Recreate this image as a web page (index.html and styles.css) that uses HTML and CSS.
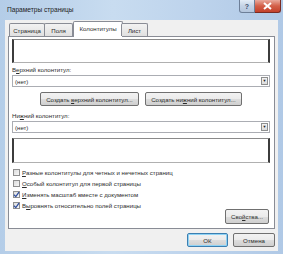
FILE: index.html
```html
<!DOCTYPE html>
<html lang="ru">
<head>
    <meta charset="UTF-8">
    <title>Параметры страницы</title>
    <link rel="stylesheet" href="styles.css">
</head>
<body>
<div class="window">
    <div class="titlebar">
        <div class="title">Параметры страницы</div>
        <div class="controls">
            <div class="ctl help">?</div>
            <div class="ctl close">
                <svg width="9" height="8" viewBox="0 0 9 8"><path d="M1 1 L8 7 M8 1 L1 7" stroke="#fff" stroke-width="2"/></svg>
            </div>
        </div>
    </div>

    <div class="client">
        <div class="tabs">
            <div class="tab t1">Страница</div>
            <div class="tab t2">Поля</div>
            <div class="tab active">Колонтитулы</div>
            <div class="tab t4">Лист</div>
        </div>

        <div class="panel">
            <div class="preview top"></div>

            <div class="label first">В<u>е</u>рхний колонтитул:</div>
            <div class="select">
                <span>(нет)</span>
                <div class="arrow">▼</div>
            </div>

            <div class="create-row">
                <button class="btn create1">Создать <u>в</u>ерхний колонтитул...</button>
                <button class="btn create2">Создать ни<u>ж</u>ний колонтитул...</button>
            </div>

            <div class="label second">Ни<u>ж</u>ний колонтитул:</div>
            <div class="select">
                <span>(нет)</span>
                <div class="arrow">▼</div>
            </div>

            <div class="preview bottom"></div>

            <div class="checks">
                <div class="check"><span class="box"></span><span><u>Р</u>азные колонтитулы для четных и нечетных страниц</span></div>
                <div class="check"><span class="box"></span><span><u>О</u>собый колонтитул для первой страницы</span></div>
                <div class="check"><span class="box"><svg width="7" height="7" viewBox="0 0 7 7"><path d="M1 3.8 L2.8 5.6 L6 1.2" stroke="#2f4f9e" stroke-width="1.3" fill="none"/></svg></span><span><u>И</u>зменять масштаб вместе с документом</span></div>
                <div class="check"><span class="box"><svg width="7" height="7" viewBox="0 0 7 7"><path d="M1 3.8 L2.8 5.6 L6 1.2" stroke="#2f4f9e" stroke-width="1.3" fill="none"/></svg></span><span>В<u>ы</u>ровнять относительно полей страницы</span></div>
            </div>

            <div class="props-row">
                <button class="btn props">Сво<u>й</u>ства...</button>
            </div>
        </div>

        <div class="footer">
            <button class="btn ok">ОК</button>
            <button class="btn cancel">Отмена</button>
        </div>
    </div>
</div>
</body>
</html>
```

FILE: styles.css
```css
body {
    margin: 0;
    width: 283px;
    height: 254px;
    overflow: hidden;
    font-family: "Liberation Sans", Arial, sans-serif;
    font-size: 6.1px;
    color: #2b2b2b;
    background: #bcd3ea;
}
.window {
    height: 254px;
    box-sizing: border-box;
    padding: 0 5px 3px 5px;
    display: flex;
    flex-direction: column;
    background: linear-gradient(90deg, #b4cde8, #c8dcf0 40%, #bdd3ec 70%, #b0c9e6);
}
.titlebar {
    height: 20px;
    display: flex;
    align-items: flex-start;
}
.title {
    padding: 6px 0 0 2px;
    font-size: 6.6px;
    color: #1c1c1c;
}
.controls {
    margin-left: auto;
    margin-right: -3px;
    display: flex;
}
.ctl {
    height: 13px;
    display: flex;
    align-items: center;
    justify-content: center;
    border: 1px solid #6d7f98;
    border-top: none;
    box-sizing: border-box;
}
.help {
    width: 16px;
    border-radius: 0 0 0 3px;
    background: linear-gradient(#e4edf7, #c4d3e6 50%, #b4c6dd);
    color: #3c4f6e;
    font-weight: bold;
    font-size: 7px;
}
.close {
    width: 26px;
    border-left: none;
    border-color: #7a2b22;
    border-radius: 0 0 3px 0;
    background: linear-gradient(#e9a99c, #d35f48 50%, #c3412b);
}
.client {
    flex: 1;
    background: #f0f0f0;
    padding: 1px 3px 4px 3px;
    display: flex;
    flex-direction: column;
}
.tabs {
    height: 15px;
    display: flex;
    padding-left: 1px;
    position: relative;
    z-index: 1;
}
.tab {
    margin-top: 2px;
    height: 13px;
    box-sizing: border-box;
    border: 1px solid #898c95;
    border-bottom: none;
    border-radius: 2px 2px 0 0;
    background: linear-gradient(#f2f2f2, #e0e0e0);
    display: flex;
    align-items: center;
    justify-content: center;
    margin-right: -1px;
}
.t1 { width: 36px; }
.t2 { width: 29px; }
.t4 { width: 27px; margin-left: -1px; }
.tab.active {
    margin-top: 0;
    height: 16px;
    width: 50px;
    margin-left: 1px;
    background: #fff;
    padding-bottom: 2px;
}
.panel {
    background: #fff;
    border: 1px solid #898c95;
    padding: 0 4px 4px 3px;
}
.preview {
    box-sizing: border-box;
    background: #fff;
    border-top: 1px solid #8a8a8a;
    border-bottom: 1px solid #b0b0b0;
    border-left: 2px solid #3c3c3c;
    border-right: 2px solid #3c3c3c;
}
.preview.top {
    margin-top: 2px;
    height: 24px;
}
.preview.bottom {
    margin-top: 5px;
    height: 25px;
}
.label {
    height: 8px;
    line-height: 8px;
}
.label.first { margin-top: 3px; }
.label.second { margin-top: 6px; }
.select {
    margin-top: 1px;
    height: 12px;
    box-sizing: border-box;
    border: 1px solid #abadb3;
    background: #fff;
    display: flex;
    align-items: center;
    padding-left: 2px;
}
.arrow {
    margin-left: auto;
    margin-right: 1px;
    width: 7px;
    height: 8px;
    box-sizing: border-box;
    border: 1px solid #8e8f8f;
    background: linear-gradient(#f4f4f4, #dcdcdc);
    font-size: 4px;
    line-height: 6px;
    text-align: center;
    color: #222;
}
.btn {
    font-family: inherit;
    font-size: 6.1px;
    color: #2b2b2b;
    padding: 0;
    height: 14px;
    box-sizing: border-box;
    border: 1px solid #707070;
    border-radius: 2px;
    background: linear-gradient(#f2f2f2, #ebebeb 50%, #dddddd 51%, #cfcfcf);
}
.create-row {
    margin-top: 5px;
    display: flex;
    justify-content: center;
    gap: 6px;
}
.create1 { width: 99px; }
.create2 { width: 97px; }
.checks {
    margin-top: 4px;
    display: flex;
    flex-direction: column;
}
.check {
    height: 11px;
    display: flex;
    align-items: center;
    gap: 2px;
}
.box {
    margin-left: 1px;
    width: 7px;
    height: 7px;
    box-sizing: border-box;
    border: 1px solid #8f8f8f;
    background: linear-gradient(135deg, #dcdcdc, #f8f8f8);
    display: flex;
    align-items: center;
    justify-content: center;
}
.box svg {
    flex: none;
}
.props-row {
    margin-top: -2px;
    display: flex;
    justify-content: flex-end;
}
.props {
    width: 44px;
    height: 15px;
    margin-right: 1px;
}
.footer {
    margin-top: 4px;
    display: flex;
    justify-content: flex-end;
    gap: 5px;
}
.ok {
    width: 41px;
    border-color: #3c7fb1;
    box-shadow: inset 0 0 0 1px #8fd3f5;
}
.cancel {
    width: 42px;
}
```
